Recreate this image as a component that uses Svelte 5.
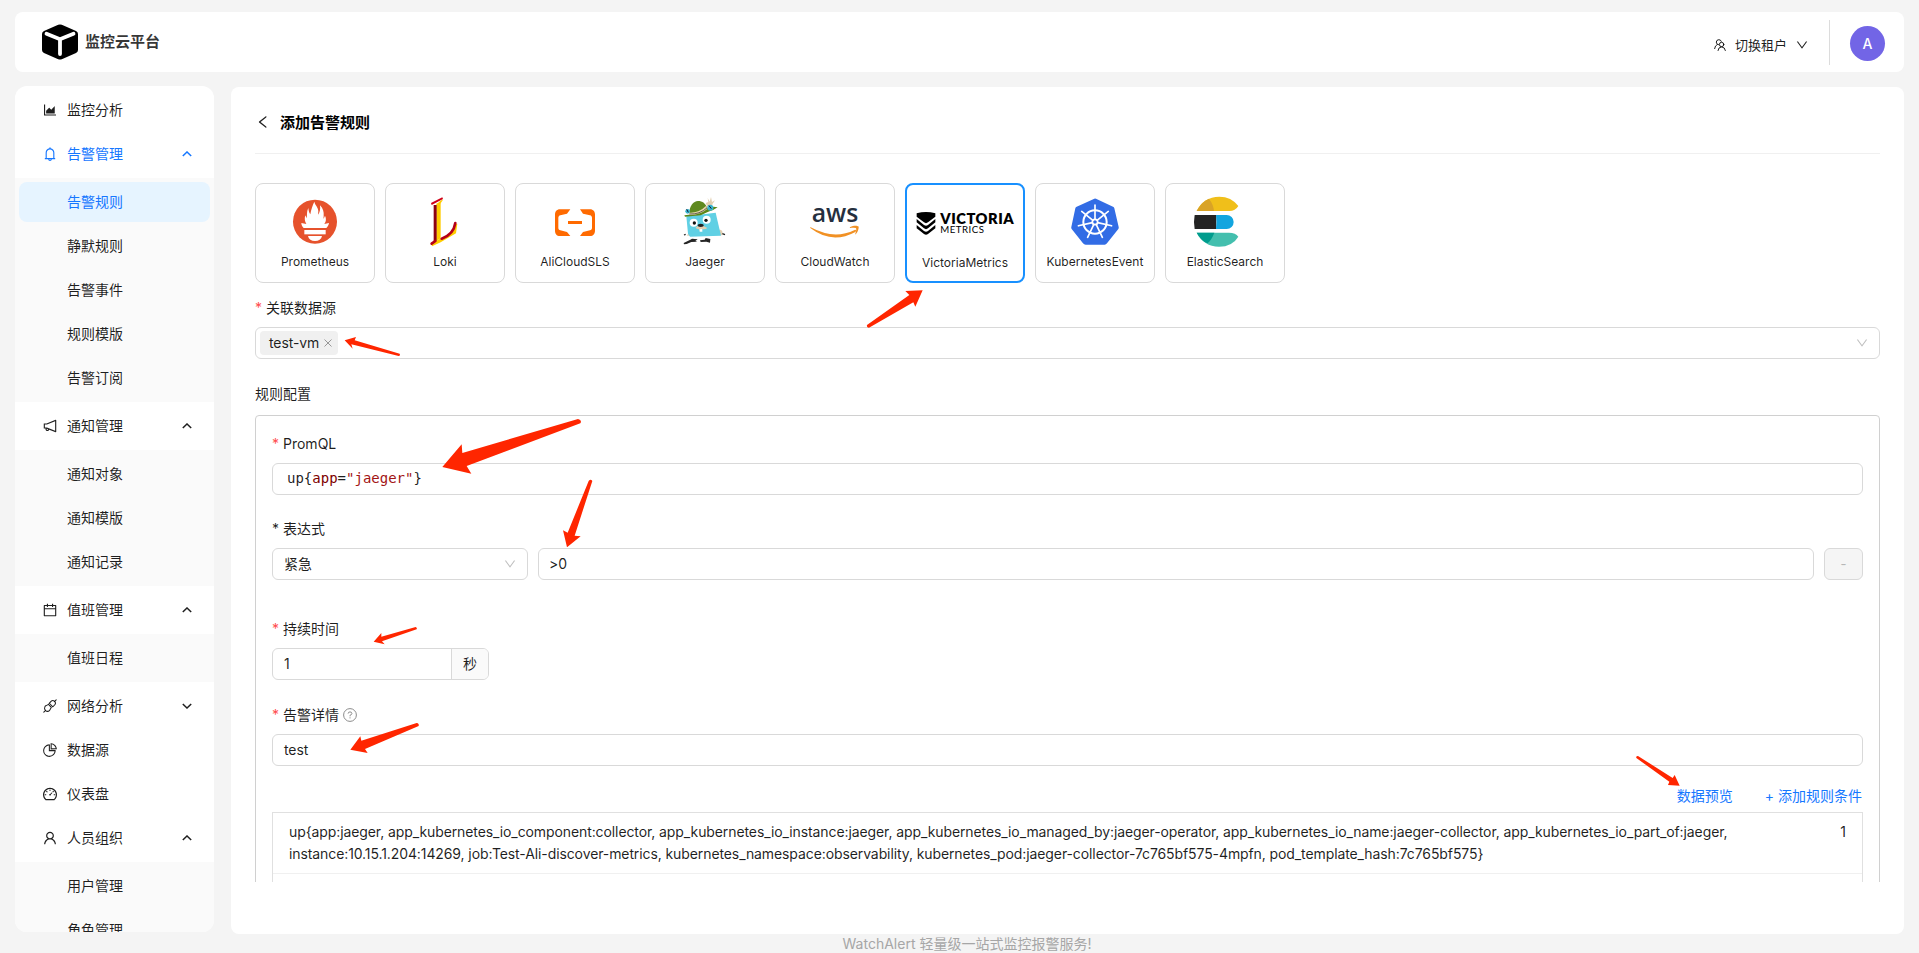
<script>
  const P = {
    area: 'M888 792H200V168c0-4.4-3.6-8-8-8h-56c-4.4 0-8 3.6-8 8v688c0 4.4 3.6 8 8 8h752c4.4 0 8-3.6 8-8v-56c0-4.4-3.6-8-8-8zm-616-64h536c4.4 0 8-3.6 8-8V284c0-7.2-8.7-10.7-13.7-5.7L592 488.6l-125.4-124a8.03 8.03 0 00-11.3 0l-189 189.6a7.87 7.87 0 00-2.3 5.6V720c0 4.4 3.6 8 8 8z',
    bell: 'M816 768h-24V428c0-141.1-104.3-257.8-240-277.2V112c0-22.1-17.9-40-40-40s-40 17.9-40 40v38.8C336.3 170.2 232 286.9 232 428v340h-24c-17.7 0-32 14.3-32 32v32c0 4.4 3.6 8 8 8h216c0 61.8 50.2 112 112 112s112-50.2 112-112h216c4.4 0 8-3.6 8-8v-32c0-17.7-14.3-32-32-32zM512 888c-26.5 0-48-21.5-48-48h96c0 26.5-21.5 48-48 48zM304 768V428c0-55.6 21.6-107.8 60.9-147.1S456.4 220 512 220c55.6 0 107.8 21.6 147.1 60.9S720 372.4 720 428v340H304z',
    horn: 'M880 112c-3.8 0-7.7.7-11.6 2.3L292 345.9H128c-8.8 0-16 7.4-16 16.6v299c0 9.2 7.2 16.6 16 16.6h101.7c-3.7 11.6-5.7 23.9-5.7 36.4 0 65.9 53.8 119.5 120 119.5 55.4 0 102.1-37.6 115.9-88.4l408.6 164.2c3.9 1.5 7.8 2.3 11.6 2.3 16.9 0 32-14.2 32-33.2V145.2C912 126.2 897 112 880 112zM344 762.3c-26.5 0-48-21.4-48-47.8 0-11.2 3.9-21.9 11-30.4l84.9 34.1c-2 24.6-22.7 44.1-47.9 44.1zm496 58.4L318.8 611.3l-12.9-5.2H184V417.9h121.9l12.9-5.2L840 203.3v617.4z',
    calendar: 'M880 184H712v-64c0-4.4-3.6-8-8-8h-56c-4.4 0-8 3.6-8 8v64H384v-64c0-4.4-3.6-8-8-8h-56c-4.4 0-8 3.6-8 8v64H144c-17.7 0-32 14.3-32 32v664c0 17.7 14.3 32 32 32h736c17.7 0 32-14.3 32-32V216c0-17.7-14.3-32-32-32zm-40 656H184V460h656v380zM184 392V256h128v48c0 4.4 3.6 8 8 8h56c4.4 0 8-3.6 8-8v-48h256v48c0 4.4 3.6 8 8 8h56c4.4 0 8-3.6 8-8v-48h128v136H184z',
    pie: 'M864 518H506V160c0-4.4-3.6-8-8-8h-26a398.46 398.46 0 00-282.8 117.1 398.19 398.19 0 00-85.7 127.1A397.61 397.61 0 0072 552a398.46 398.46 0 00117.1 282.8c36.7 36.7 79.5 65.6 127.1 85.7A397.61 397.61 0 00472 952a398.46 398.46 0 00282.8-117.1c36.7-36.7 65.6-79.5 85.7-127.1A397.61 397.61 0 00872 552v-26c0-4.4-3.6-8-8-8zM705.7 787.8A331.59 331.59 0 01470.4 884c-88.1-.4-170.9-34.9-233.2-97.2C174.5 724.1 140 640.7 140 552c0-88.7 34.5-172.1 97.2-234.8 54.6-54.6 124.9-87.9 200.8-95.5V586h364.3c-7.7 76.3-41.3 147-96.6 201.8zM952 462.4l-2.6-28.2c-8.5-92.1-49.4-179-115.2-244.6A399.4 399.4 0 00589 74.6L560.7 72c-4.7-.4-8.7 3.2-8.7 7.9V464c0 4.4 3.6 8 8 8l384-1c4.7 0 8.4-4 8-8.6zm-332.2-58.2V147.6a332.24 332.24 0 01166.4 89.8c45.7 45.6 77 103.6 90 166.1l-256.4.7z',
    gauge: 'M924.8 385.6a446.7 446.7 0 00-96-142.4 446.7 446.7 0 00-142.4-96C631.1 123.8 572.5 112 512 112s-119.1 11.8-174.4 35.2a446.7 446.7 0 00-142.4 96 446.7 446.7 0 00-96 142.4C75.8 440.9 64 499.5 64 560c0 132.7 58.3 257.7 159.9 343.1l1.7 1.4c5.8 4.8 13.1 7.5 20.6 7.5h531.7c7.5 0 14.8-2.7 20.6-7.5l1.7-1.4C901.7 817.7 960 692.7 960 560c0-60.5-11.9-119.1-35.2-174.4zM761.4 836H262.6A371.12 371.12 0 01140 560c0-99.4 38.7-192.8 109-263 70.3-70.3 163.7-109 263-109 99.4 0 192.8 38.7 263 109 70.3 70.3 109 163.7 109 263 0 105.6-44.5 205.5-122.6 276zM623.5 421.5a8.03 8.03 0 00-11.3 0L527.7 506c-18.7-5-39.4-.2-54.1 14.5a55.95 55.95 0 000 79.2 55.95 55.95 0 0079.2 0 55.87 55.87 0 0014.5-54.1l84.5-84.5c3.1-3.1 3.1-8.2 0-11.3l-28.3-28.3zM490 320h44c4.4 0 8-3.6 8-8v-80c0-4.4-3.6-8-8-8h-44c-4.4 0-8 3.6-8 8v80c0 4.4 3.6 8 8 8zm260 218v44c0 4.4 3.6 8 8 8h80c4.4 0 8-3.6 8-8v-44c0-4.4-3.6-8-8-8h-80c-4.4 0-8 3.6-8 8zm12.7-197.2l-31.1-31.1a8.03 8.03 0 00-11.3 0l-56.6 56.6a8.03 8.03 0 000 11.3l31.1 31.1c3.1 3.1 8.2 3.1 11.3 0l56.6-56.6c3.1-3.1 3.1-8.2 0-11.3zm-458.6-31.1a8.03 8.03 0 00-11.3 0l-31.1 31.1a8.03 8.03 0 000 11.3l56.6 56.6c3.1 3.1 8.2 3.1 11.3 0l31.1-31.1c3.1-3.1 3.1-8.2 0-11.3l-56.6-56.6zM262 530h-80c-4.4 0-8 3.6-8 8v44c0 4.4 3.6 8 8 8h80c4.4 0 8-3.6 8-8v-44c0-4.4-3.6-8-8-8z',
    user: 'M858.5 763.6a374 374 0 00-80.6-119.5 375.63 375.63 0 00-119.5-80.6c-.4-.2-.8-.3-1.2-.5C719.5 518 760 444.7 760 362c0-137-111-248-248-248S264 225 264 362c0 82.7 40.5 156 102.8 201.1-.4.2-.8.3-1.2.5-44.8 18.9-85 46-119.5 80.6a375.63 375.63 0 00-80.6 119.5A371.7 371.7 0 00136 901.8a8 8 0 008 8.2h60c4.4 0 7.9-3.5 8-7.8 2-77.2 33-149.5 87.8-204.3 56.7-56.7 132-87.9 212.2-87.9s155.5 31.2 212.2 87.9C779 752.7 810 825 812 902.2c.1 4.4 3.6 7.8 8 7.8h60a8 8 0 008-8.2c-1-47.8-10.9-94.3-29.5-138.2zM512 534c-45.9 0-89.1-17.9-121.6-50.4S340 407.9 340 362c0-45.9 17.9-89.1 50.4-121.6S466.1 190 512 190s89.1 17.9 121.6 50.4S684 316.1 684 362c0 45.9-17.9 89.1-50.4 121.6S557.9 534 512 534z',
    left: 'M724 218.3V141c0-6.7-7.7-10.4-12.9-6.3L260.3 486.8a31.86 31.86 0 000 50.3l450.8 352.1c5.3 4.1 12.9.4 12.9-6.3v-77.3c0-4.9-2.3-9.6-6.1-12.6l-360-281 360-281.1c3.8-3 6.1-7.7 6.1-12.6z',
    down: 'M884 256h-75c-5.1 0-9.9 2.5-12.9 6.6L512 654.2 227.9 262.6c-3-4.1-7.8-6.6-12.9-6.6h-75c-6.5 0-10.3 7.4-6.5 12.7l352.6 486.1c12.8 17.6 39 17.6 51.7 0l352.6-486.1c3.9-5.3.1-12.7-6.4-12.7z'
  };

  const menu = [
    { icon: 'area', label: '监控分析' },
    { icon: 'bell', label: '告警管理', active: true, open: true, children: ['告警规则', '静默规则', '告警事件', '规则模版', '告警订阅'] },
    { icon: 'horn', label: '通知管理', open: true, children: ['通知对象', '通知模版', '通知记录'] },
    { icon: 'calendar', label: '值班管理', open: true, children: ['值班日程'] },
    { icon: 'api', label: '网络分析', open: false, children: [] },
    { icon: 'pie', label: '数据源' },
    { icon: 'gauge', label: '仪表盘' },
    { icon: 'user', label: '人员组织', open: true, children: ['用户管理', '角色管理'] }
  ];

  const sources = ['Prometheus', 'Loki', 'AliCloudSLS', 'Jaeger', 'CloudWatch', 'VictoriaMetrics', 'KubernetesEvent', 'ElasticSearch'];
  let selected = $state('VictoriaMetrics');
  const spokes = [0, 1, 2, 3, 4, 5, 6].map((i) => (i * 360) / 7);
</script>

{#snippet icon(name, size)}
  {#if name === 'api'}
    <svg class="ic" width={size} height={size} viewBox="0 0 14 14" fill="none" stroke="currentColor" stroke-width="1.05" stroke-linecap="round">
      <path d="M5.8 5.2 3.5 6.4A2.7 2.7 0 0 0 2 8.2a2.7 2.7 0 0 0 .6 2.8l.4.4a2.7 2.7 0 0 0 2.7.6 2.8 2.8 0 0 0 1.7-1.6L8.6 8.2Z" transform="translate(-.3 .2)" />
      <path d="M6.2 4.4 9.4 7.7l1.800-1.800a2.600 2.600 0 0 0 0-3.600l-.1-.1a2.600 2.600 0 0 0-3.500 0L5.800 4.200Z" transform="translate(.4 .1)" />
      <path d="M11.6 2.4 13.2.8M2.4 11.6.8 13.2" />
    </svg>
  {:else}
    <svg class="ic" width={size} height={size} viewBox="64 64 896 896" fill="currentColor"><path d={P[name]} /></svg>
  {/if}
{/snippet}

{#snippet logo(name)}
  <svg class="logo" width="100" height="56" viewBox="45 75 300 168">
    {#if name === 'Prometheus'}
      <circle cx="195" cy="158" r="66" fill="#e6522c" />
      <path fill="#fff" d="M193 98c3 12 12 17 12 29 0 4-1 7-1 10 5-5 8-16 6-28 10 10 12 21 11 31 0 4-1 7 0 9l4-9c4 8 4 17-2 25l14-3c-1 6-4 11-8 15h-68c-4-4-7-9-7-15l15 3c-5-8-6-17-3-26l4 9c2-11-1-20 5-31 1 8 2 14 6 19 2-14 7-27 12-38z" />
      <rect x="163" y="183" width="64" height="13" fill="#fff" />
      <path d="M174 201h42c-2 10-10 15-21 15s-19-5-21-15z" fill="#fff" />
    {:else if name === 'Loki'}
      <path d="M169 104 182 98V208L169 216z" fill="#fc0" />
      <path d="M161 108h9v108l-9 4z" fill="#8c0010" />
      <path d="M153 102l34-17 2 5-34 18z" fill="#d00018" />
      <path d="M180 96l10-5-8 12-12 5z" fill="#fc0" />
      <path d="M154 224l15-9 44-23 14-26 5-2-4 29-46 27-26 12z" fill="#fc0" />
      <path d="M155 224l11-8M185 209Q221 196 226 162" fill="none" stroke="#b50018" stroke-width="8" stroke-linecap="round" />
    {:else if name === 'AliCloudSLS'}
      <path fill="#ff6a00" d="M181 121l-10 13-20 5c-4 1-6 4-6 8v29c0 4 2 7 6 8l20 5 10 12h-31c-10 0-15-7-15-16v-48c0-9 5-16 15-16zM210 121h30c10 0 15 7 15 16v48c0 9-5 16-15 16h-30l9-12 21-5c4-1 6-4 6-8v-29c0-4-2-7-6-8l-21-5z" />
      <rect x="174" y="156" width="42" height="9" fill="#ff6a00" />
    {:else if name === 'Jaeger'}
      <path d="M197 102l8-3-2-12 6 11 4-14 3 15 9-5-7 10-4 12-9 3z" fill="#e3cfb1" />
      <path d="M141 200l7-14 5 14zM236 183c7-3 13 3 12 11l-2 5-10-1z" fill="#e3cfb1" />
      <path d="M139 142l88-11 16 69-93 3-6-9z" fill="#60d0e4" />
      <path d="M133 139q43-3 60-16t40-8q-12 9-28 13l-23 11-47 4z" fill="#5b8718" />
      <path d="M148 133c0-22 12-37 26-37 13 0 24 8 27 21l-20 13z" fill="#5f891f" />
      <path d="M148 131q27 2 50-20l4 9q-22 18-54 18z" fill="#e5d7a9" />
      <path d="M148 135q31 2 54-19" fill="none" stroke="#222" stroke-width="2" />
      <circle cx="143" cy="127" r="7" fill="#38b6cf" /><circle cx="211" cy="116" r="9" fill="#38b6cf" />
      <path d="M140 121l5 9M207 110l7 9" stroke="#113" stroke-width="3" />
      <circle cx="161" cy="161" r="12" fill="#fff" /><circle cx="200" cy="152" r="12" fill="#fff" />
      <circle cx="163" cy="162" r="5" fill="#111" /><circle cx="198" cy="154" r="5" fill="#111" />
      <path d="M167 175q10-9 23-4l12 6q-6 5-15 3l-7 7-4-7q-8 1-9-5z" fill="#e3cfb1" />
      <ellipse cx="182" cy="169" rx="9" ry="5" fill="#222" />
      <path d="M179 181v7h8v-8" fill="#fff" />
      <path d="M131 222l20-10 5-3 17 2-7 5 6 2-18 1-14 6-8 1zM180 214l14-2 3-5 14 3-1 11-11-3-17 1z" fill="#252525" />
      <path d="M137 196l-5 2M247 194l8 3" stroke="#222" stroke-width="4" />
    {:else if name === 'CloudWatch'}
      <text x="125" y="160" textLength="140" lengthAdjust="spacingAndGlyphs" font-family="Open Sans" font-weight="600" font-size="76" fill="#252f3e">aws</text>
      <path d="M122 175q70 38 132 8c4-2 6 3 2 6q-70 38-134-11c-2-2-2-4 0-3z" fill="#f19124" />
      <path d="M241 174c8-5 21-5 24-2s-1 17-8 24c-2 1-2 0-1-2 2-6 4-14 2-16s-10-2-17-1c-2 0-2-2 0-3z" fill="#f19124" />
    {:else if name === 'VictoriaMetrics'}
      <path d="M50 130q28-8 56 0v10l-22 17q-6 5-12 0L50 140z" />
      <path d="M50 147l22 18q6 5 12 0l22-18v10l-22 18q-6 5-12 0L50 157zM50 165l22 18q6 5 12 0l22-18v10l-22 17q-6 4-12 0L50 175z" />
      <text x="121" y="162" textLength="220" font-family="Lato" font-weight="800" font-size="44">VICTORIA</text>
      <text x="121" y="188" textLength="131" font-family="Lato" font-size="29">METRICS</text>
    {:else if name === 'KubernetesEvent'}
      <path d="M193 89q2-1 5 0l51 24q3 1 4 5l13 56q1 3-1 6l-34 43q-3 4-7 4h-57q-5 0-8-4l-34-43q-2-3-1-6l12-56q1-4 4-5z" fill="#326ce5" />
      <g fill="none" stroke="#fff">
        <circle cx="195" cy="159" r="35" stroke-width="6" />
        {#each spokes as a}
          <path d="M195 151V108" stroke-width="5" stroke-linecap="round" transform="rotate({a} 195 159)" />
        {/each}
        <circle cx="195" cy="159" r="8" stroke-width="5" />
      </g>
    {:else}
      <path d="M110 126q20-42 68-43 36 0 57 28-9 15-27 15z" fill="#f0bf1a" />
      <path d="M110 126q14-27 37-37 13 17 15 37z" fill="#d9a326" />
      <path d="M104 138q-4 20 0 42h65v-42z" fill="#232323" />
      <path d="M168 138h32a21 21 0 0 1 0 42h-32q3-20 0-42z" fill="#12a5df" />
      <path d="M110 191h97q20 0 28 12-18 30-58 30-46-1-67-42z" fill="#43bfae" />
      <path d="M110 191h53q-8 22-21 32-20-9-32-32z" fill="#009c8d" />
    {/if}
  </svg>
{/snippet}

<div class="app">
  <header class="top">
    <svg class="brand-mark" width="36" height="36" viewBox="0 0 36 36">
      <path d="M16.2.8Q18 0 19.8.8L34 7q2 1 2 3v16q0 2-2 3L19.8 35.2q-1.800.8-3.600 0L2 29q-2-1-2-3V10q0-2 2-3Z" />
      <path d="M4.500 9.700 18 15.300 31.500 9.700M18 15.300V30" fill="none" stroke="#fff" stroke-width="3.800" stroke-linecap="round" />
    </svg>
    <span class="brand">监控云平台</span>
    <div class="tenant">
      <svg width="12" height="12" viewBox="0 0 12 12" fill="none" stroke="currentColor" stroke-width="1" stroke-linecap="round">
        <circle cx="7.600" cy="5.500" r="2.200" />
        <path d="M4 11.500q.3-3.400 3.600-3.600 3.300.2 3.800 3.600M7.300 2.300Q6.700.6 4.800.7 2.500.8 2.300 3q0 1.500 1.200 2.300Q1 6.500.6 9.600M3.500 5.300l1 .3" />
      </svg>
      <span>切换租户</span>
      {@render icon('down', 12)}
    </div>
    <div class="avatar">A</div>
  </header>

  <div class="body">
    <nav class="side">
      {#each menu as m}
        <div class="item" class:active={m.active}>
          {@render icon(m.icon, 14)}
          <span>{m.label}</span>
          {#if m.children}
            <svg class="caret" class:closed={!m.open} width="10" height="6" viewBox="0 0 10 6" fill="none" stroke="currentColor" stroke-width="1.500"><path d="M.8 5 5 1l4.200 4" /></svg>
          {/if}
        </div>
        {#if m.open}
          <div class="sub">
            {#each m.children as c}
              <div class="item child" class:current={c === '告警规则'}>{c}</div>
            {/each}
          </div>
        {/if}
      {/each}
    </nav>

    <main class="panel">
      <div class="scroll">
        <div class="title">
          {@render icon('left', 14)}
          <h1>添加告警规则</h1>
        </div>

        <div class="cards">
          {#each sources as s}
            <button class="card" class:on={s === selected} onclick={() => (selected = s)}>
              {@render logo(s)}
              <span>{s}</span>
            </button>
          {/each}
        </div>

        <div class="label first"><i>*</i>关联数据源</div>
        <div class="field select">
          <span class="tag">test-vm
            <svg width="8" height="8" viewBox="0 0 8 8" stroke="#8c8c8c" stroke-width=".9"><path d="M.5.5l7 7M7.500.5l-7 7" /></svg>
          </span>
          {@render icon('down', 12)}
        </div>

        <div class="label section">规则配置</div>
        <section class="box">
          <div class="label"><i>*</i>PromQL</div>
          <div class="field code">up{'{'}<span class="key">app</span>=<span class="str">"jaeger"</span>{'}'}</div>

          <div class="label expr-label">* 表达式</div>
          <div class="expr">
            <div class="field level">紧急{@render icon('down', 12)}</div>
            <div class="field value">&gt;0</div>
            <button class="field minus">-</button>
          </div>

          <div class="label wide"><i>*</i>持续时间</div>
          <div class="field time"><span>1</span><em>秒</em></div>

          <div class="label gap"><i>*</i>告警详情
            <svg class="help" width="14" height="14" viewBox="0 0 14 14" fill="none" stroke="#8c8c8c"><circle cx="7" cy="7" r="6.400" /><path d="M5.100 5.600q.1-1.700 1.900-1.700t1.900 1.600q0 1.200-1.900 1.800v1" /><path d="M7 9.300v1.100" /></svg>
          </div>
          <div class="field">test</div>

          <div class="links"><a href="#preview">数据预览</a><a href="#add">+ 添加规则条件</a></div>

          <div class="result">
            <div class="row">
              <p>up&#123;app:jaeger, app_kubernetes_io_component:collector, app_kubernetes_io_instance:jaeger, app_kubernetes_io_managed_by:jaeger-operator, app_kubernetes_io_name:jaeger-collector, app_kubernetes_io_part_of:jaeger,<br />instance:10.15.1.204:14269, job:Test-Ali-discover-metrics, kubernetes_namespace:observability, kubernetes_pod:jaeger-collector-7c765bf575-4mpfn, pod_template_hash:7c765bf575&#125;</p>
              <b>1</b>
            </div>
          </div>
        </section>
      </div>
    </main>
  </div>

  <footer>WatchAlert 轻量级一站式监控报警服务!</footer>

  <svg class="arrows" width="1919" height="953" viewBox="0 0 1919 953" fill="#ff2600">
    <g transform="translate(640 170) scale(.33333)"><path d="M848 361 796 363 808 375 681 465Q679 472 687 473L820 397 826 410Z" /></g>
    <g transform="translate(250 170) scale(.33333)">
      <path d="M284 511 318 501 314 511 449 551Q452 557 446 558L304 523 308 536Z" />
    </g>
    <g transform="translate(250 370) scale(.33333)">
      <path d="M577 291 635 223 637 249 984 147Q997 150 991 160L650 288 664 311Z" />
      <path d="M951 532 939 481 953 488 1016 333Q1022 326 1027 333L974 497 992 499Z" />
    </g>
    <g transform="translate(250 580) scale(.33333)">
      <path d="M371 185 394 159 394 170 497 141Q503 143 500 148L396 184 404 193Z" />
      <path d="M301 509 331 469 334 482 500 429Q508 430 506 438L345 507 353 519Z" />
    </g>
    <g transform="translate(1600 540) scale(.33333)"><path d="M239 737 224 705 218 714 114 648Q107 648 109 654L208 725 204 735Z" /></g>
  </svg>
</div>

<style>
  :global(body) { margin: 0; background: #f4f4f4; }
  .app {
    position: relative; box-sizing: border-box; width: 1919px; height: 953px; padding: 12px 15px 0; overflow: hidden;
    font-family: Inter, 'Noto Sans CJK SC', sans-serif; font-size: 14px; line-height: 22px; color: rgba(0, 0, 0, 0.88);
  }
  .app *, .app :global(svg) { box-sizing: border-box; }
  svg { display: block; flex: none; }
  .top { display: flex; align-items: center; height: 60px; padding: 0 19px 0 27px; background: #fff; border-radius: 8px; }
  .brand-mark { margin-top: -1px; }
  .brand { margin: -1px 0 0 7px; font-size: 15px; font-weight: 600; color: rgba(0, 0, 0, 0.8); }
  .tenant { display: flex; align-items: center; gap: 9px; margin-left: auto; height: 45px; padding: 4px 21px 0 0; border-right: 1px solid #dcdcdc; font-size: 13px; margin-top: 1px; }
  .avatar { width: 35px; height: 35px; margin: 3px 0 0 20px; border-radius: 50%; background: #7265e6; color: #fff; text-align: center; line-height: 35px; font-weight: 500; }

  .body { display: flex; align-items: flex-start; gap: 17px; margin-top: 14px; }
  .side { display: flow-root; flex: none; width: 199px; height: 846px; overflow: hidden; background: #fff; border-radius: 12px; }
  .item { display: flex; align-items: center; height: 40px; margin: 4px; padding: 0 18px 0 24px; border-radius: 8px; }
  .item span { margin-left: 10px; }
  .active { color: #1677ff; }
  .caret { margin-left: auto; }
  .closed { transform: rotate(180deg); }
  .sub { display: flow-root; background: #fafafa; }
  .child { padding-left: 48px; }
  .current { background: #e6f4ff; color: #1677ff; }

  .panel { flex: 1; height: 847px; margin-top: 1px; padding: 0 24px; background: #fff; border-radius: 8px; }
  .scroll { height: 795px; overflow: hidden; }
  .title { display: flex; align-items: center; gap: 10px; height: 67px; padding: 4px 0 0 1px; border-bottom: 1px solid #f0f0f0; }
  h1 { margin: 1px 0 0; font-size: 15px; font-weight: 700; color: #000; }
  .cards { display: flex; gap: 10px; margin-top: 29px; }
  .card {
    display: flex; flex-direction: column; align-items: center; width: 120px; height: 100px; padding: 10px 0 0;
    border: 1px solid #d9d9d9; border-radius: 8px; background: #fff; font: 12px/18px Inter, sans-serif; color: rgba(0, 0, 0, 0.88);
  }
  .card span { margin-top: 3px; }
  .on { border: 2px solid #1890ff; }

  .label { display: flex; align-items: center; height: 22px; }
  .label i { width: 11px; font-style: normal; color: #ff4d4f; }
  .first { margin: 14px 0 8px; }
  .field { display: flex; align-items: center; height: 32px; padding: 0 11px; border: 1px solid #d9d9d9; border-radius: 6px; background: #fff; letter-spacing: -0.1px; }
  .select, .level { justify-content: space-between; color: inherit; }
  .select { padding-left: 4px; }
  .select > :global(svg), .level > :global(svg) { color: #bfbfbf; }
  .tag { display: flex; align-items: center; gap: 5px; height: 24px; padding: 0 6px 0 9px; border-radius: 4px; background: #f0f0f0; }
  .section { margin: 24px 0 10px; }
  .box { height: 600px; padding: 17px 16px; border: 1px solid #d0d0d0; border-radius: 4px; }
  .box .field { margin-top: 8px; }
  .code { padding: 0 14px 2px; font-family: 'DejaVu Sans Mono', monospace; letter-spacing: 0; }
  .key { color: #800000; }
  .str { color: #a31515; }
  .gap { margin-top: 24px; }
  .expr-label { margin-top: 23px; }
  .expr { display: flex; gap: 10px; }
  .level { width: 256px; }
  .value { flex: 1; padding-left: 10px; }
  .minus { justify-content: center; width: 39px; padding: 0; background: #f5f5f5; color: rgba(0, 0, 0, 0.25); font: inherit; }
  .wide { margin-top: 38px; }
  .time { width: 217px; padding-right: 0; overflow: hidden; }
  .time span { flex: 1; }
  .time em { width: 37px; height: 30px; border-left: 1px solid #d9d9d9; background: #fafafa; font-style: normal; line-height: 30px; text-align: center; }
  .help { margin-left: 4px; }
  .links { display: flex; justify-content: flex-end; gap: 32px; height: 22px; margin: 19px 1px 5px; }
  .links a { color: #1677ff; text-decoration: none; }
  .result { height: 200px; border: 1px solid #e0e0e0; }
  .row { display: flex; justify-content: space-between; height: 61px; padding: 8px 16px; border-bottom: 1px solid #f0f0f0; }
  p { margin: 0; white-space: nowrap; letter-spacing: -0.098px; }
  b { font-weight: 400; }
  footer { padding-left: 15px; text-align: center; color: #a6a6a6; line-height: 20px; }
  .arrows { position: absolute; left: 0; top: 0; pointer-events: none; }
</style>
